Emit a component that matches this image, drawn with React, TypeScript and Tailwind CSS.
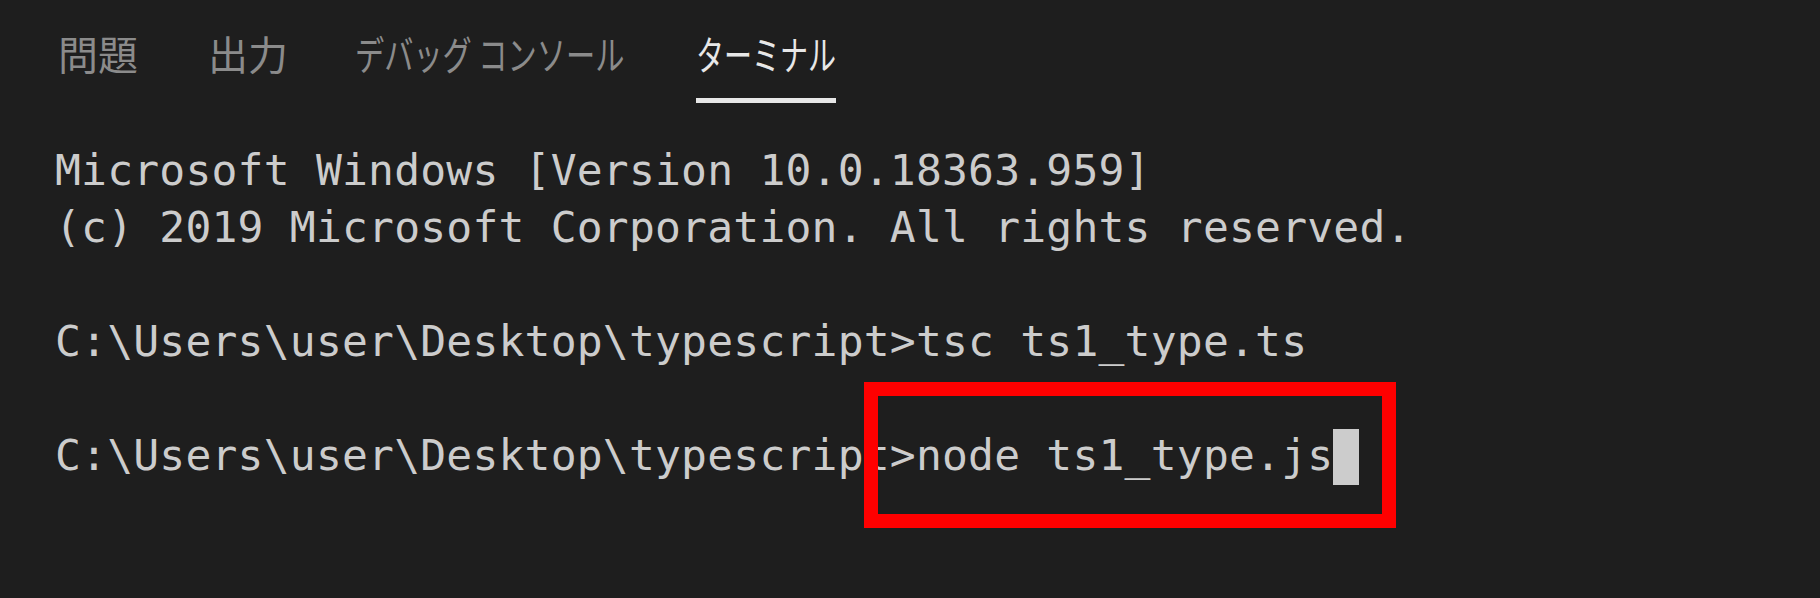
import React from "react";

const mono = { fontFamily: '"DejaVu Sans Mono", "Liberation Mono", monospace' };

export default function App() {
  const lines = [
    "Microsoft Windows [Version 10.0.18363.959]",
    "(c) 2019 Microsoft Corporation. All rights reserved.",
    "",
    "C:\\Users\\user\\Desktop\\typescript>tsc ts1_type.ts",
    "",
  ];
  return (
    <div className="relative w-full h-[598px] bg-[#1e1e1e] overflow-hidden">
      <div
        className="flex pt-[33px] pl-[58px] gap-[73px]"
        style={{ fontFamily: '"Noto Sans CJK JP", "Noto Sans", sans-serif' }}
      >
        <div className="w-[77px] flex flex-col">
          <span className="h-[40px] text-[40px] leading-[40px] text-[#8b8b8b] whitespace-nowrap">問題</span>
        </div>
        <div className="w-[74px] flex flex-col">
          <span className="h-[40px] text-[40px] leading-[40px] text-[#8b8b8b] whitespace-nowrap">出力</span>
        </div>
        <div className="w-[268px] flex flex-col">
          <span className="h-[40px] text-[40px] leading-[40px] text-[#8b8b8b] whitespace-nowrap inline-block origin-left scale-x-[0.73]">
            デバッグ コンソール
          </span>
        </div>
        <div className="w-[140px] flex flex-col">
          <span className="h-[40px] text-[40px] leading-[40px] text-[#e7e7e7] whitespace-nowrap inline-block origin-left scale-x-[0.7]">
            ターミナル
          </span>
          <div className="mt-[25px] h-[5px] w-[140px] bg-[#e7e7e7]" />
        </div>
      </div>

      <div
        className="absolute left-0 top-[142px] pl-[55px] text-[43px] leading-[57px] tracking-[0.2px] text-[#cccccc] whitespace-pre"
        style={mono}
      >
        {lines.map((l, i) => (
          <div key={i} className="h-[57px]">
            {l}
          </div>
        ))}
        <div className="h-[57px] flex items-start">
          <span>{"C:\\Users\\user\\Desktop\\typescript>node ts1_type.js"}</span>
          <span className="inline-block w-[26px] h-[56px] mt-[2px] bg-[#cccccc]" />
        </div>
      </div>

      <div className="absolute left-[864px] top-[382px] w-[532px] h-[146px] border-[14px] border-[#ff0000]" />
    </div>
  );
}
